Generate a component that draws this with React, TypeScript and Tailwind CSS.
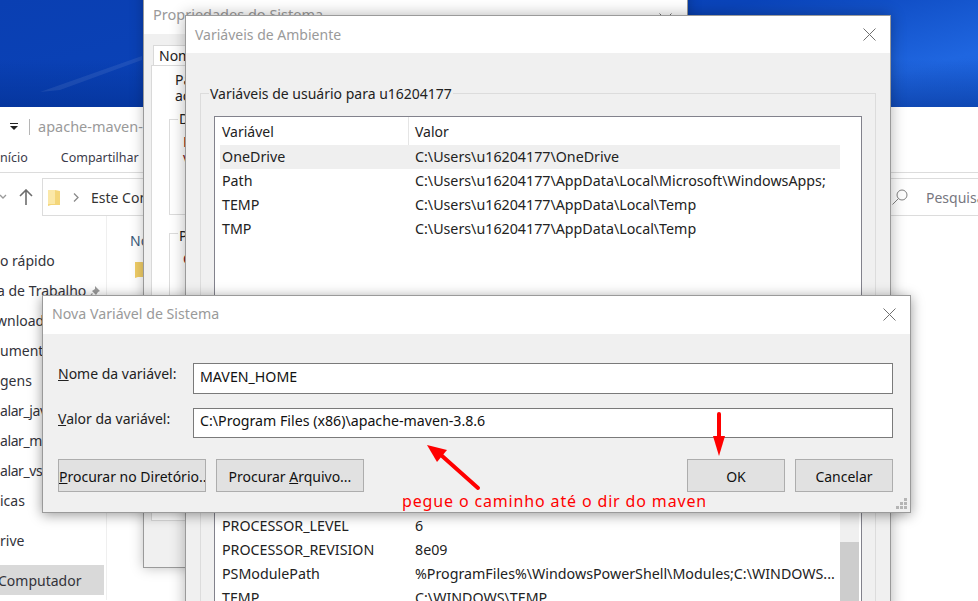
const font = "font-['Noto_Sans','Open_Sans',sans-serif]";

const sidebar = [
  { label: "o rápido", top: "mt-[34px]" },
  { label: "a de Trabalho", top: "mt-[6px] -ml-[3px]" },
  { label: "wnload", top: "mt-[6px] -ml-[4px]" },
  { label: "ument", top: "mt-[6px]" },
  { label: "gens", top: "mt-[6px]" },
  { label: "alar_java", top: "mt-[6px] tracking-[-0.4px]" },
  { label: "alar_maven", top: "mt-[6px] tracking-[-0.4px]" },
  { label: "alar_vscode", top: "mt-[6px] tracking-[-0.4px]" },
  { label: "icas", top: "mt-[6px]" },
  { label: "rive", top: "mt-[16px]" },
];

const userVars = [
  ["OneDrive", "C:\\Users\\u16204177\\OneDrive"],
  ["Path", "C:\\Users\\u16204177\\AppData\\Local\\Microsoft\\WindowsApps;"],
  ["TEMP", "C:\\Users\\u16204177\\AppData\\Local\\Temp"],
  ["TMP", "C:\\Users\\u16204177\\AppData\\Local\\Temp"],
];

const systemVars = [
  ["PROCESSOR_LEVEL", "6"],
  ["PROCESSOR_REVISION", "8e09"],
  ["PSModulePath", "%ProgramFiles%\\WindowsPowerShell\\Modules;C:\\WINDOWS..."],
  ["TEMP", "C:\\WINDOWS\\TEMP"],
];

function CloseIcon() {
  return (
    <svg width="13" height="13" viewBox="0 0 13 13" fill="none" stroke="#6f6f6f" strokeWidth="1">
      <path d="M0.5 0.5 12.5 12.5M12.5 0.5 0.5 12.5" />
    </svg>
  );
}

function VarRow({ name, value, selected }: { name: string; value: string; selected?: boolean }) {
  return (
    <div className={`flex h-[24px] shrink-0 items-center pl-[2px] whitespace-nowrap text-[14.25px] text-[#222] ${selected ? "bg-[#efefef]" : ""}`}>
      <div className="w-[193px] shrink-0">{name}</div>
      <div>{value}</div>
    </div>
  );
}

function DialogButton({ children, className }: { children: React.ReactNode; className: string }) {
  return (
    <button className={`h-[33px] border border-[#adadad] bg-[#e1e1e1] pt-[2px] text-[14px] text-[#111] whitespace-nowrap overflow-hidden ${className}`}>
      {children}
    </button>
  );
}

export default function App() {
  return (
    <div className={`relative h-[601px] w-[978px] overflow-hidden bg-white text-[14px] text-[#1a1a1a] ${font}`}>
      {/* Wallpaper */}
      <div className="h-[107px] bg-[linear-gradient(180deg,transparent_55%,rgba(0,40,130,0.45)_100%),linear-gradient(165deg,#0a3fb2_0%,#0a44ba_55%,#1f66e0_85%,#1c62dc_100%)]">
        <svg width="150" height="107" viewBox="0 0 150 107">
          <path d="M40 92 142 56 142 60 60 90z" fill="#ffffff" opacity="0.08" />
        </svg>
      </div>

      {/* Explorer behind everything */}
      <div className="flex h-[66px] flex-col border-b border-[#dcdcdc]">
        <div className="flex h-[40px] items-center">
          <svg className="ml-[9px]" width="10" height="8" viewBox="0 0 10 8" fill="#222">
            <path d="M1 0h8v1H1zM1 3h8L5 7z" />
          </svg>
          <div className="ml-[10px] h-[16px] w-px bg-[#b5b5b5]" />
          <span className="ml-[8px] text-[14.5px] text-[#9a9a9a]">apache-maven-</span>
        </div>
        <div className="flex h-[25px] items-end pb-[4px] text-[12.5px] text-[#3b3b4a]">
          <span>nício</span>
          <span className="ml-[33px]">Compartilhar</span>
        </div>
      </div>
      <div className="mt-[5px] flex h-[38px] items-center">
        <svg className="shrink-0" width="8" height="8" viewBox="0 0 8 8" fill="none" stroke="#9a9a9a" strokeWidth="1.3">
          <path d="M0 2l3 3 3-3" />
        </svg>
        <svg className="ml-[11px] shrink-0" width="14" height="16" viewBox="0 0 14 16" fill="none" stroke="#6d6d6d" strokeWidth="1.6">
          <path d="M7 16V1M1 7l6-6 6 6" />
        </svg>
        <div className="ml-[9px] flex h-[38px] w-[847px] shrink-0 items-center border border-[#dcdcdc]">
          <svg className="ml-[5px]" width="13" height="17" viewBox="0 0 13 17">
            <path d="M0 1h7l5 1v14H3l-3 1z" fill="#f4d67a" />
            <path d="M0 1h7v14H0z" fill="#fbe8a8" />
          </svg>
          <svg className="ml-[12px]" width="6" height="9" viewBox="0 0 6 9" fill="none" stroke="#8a8a8a" strokeWidth="1.3">
            <path d="M1 0.5l4 4-4 4" />
          </svg>
          <span className="ml-[12px] text-[#333]">Este Computador</span>
        </div>
        <div className="flex h-[38px] flex-1 items-center border-y border-[#dcdcdc] pl-[3px] text-[#77777f]">
          <svg width="16" height="16" viewBox="0 0 16 16" fill="none" stroke="#808080" strokeWidth="1">
            <circle cx="10" cy="6" r="5" />
            <path d="M6.5 9.5 0.5 15.5" />
          </svg>
          <span className="ml-[18px] whitespace-nowrap">Pesquisa</span>
        </div>
      </div>
      <div className="flex h-[384px]">
        <div className="w-[107px] border-r border-[#efefef] overflow-hidden whitespace-nowrap text-[#33333a]">
          {sidebar.map((item) => (
            <div key={item.label} className={`relative h-[24px] ${item.top}`}>
              {item.label}
              {item.label === "a de Trabalho" && (
                <svg className="absolute left-[90px] top-[5px]" width="14" height="14" viewBox="0 0 14 14" fill="#9a9a9a">
                  <path d="M8 1l5 5-2 1-2 3-4-4 3-2zM5 8l-4 5 5-4z" />
                </svg>
              )}
            </div>
          ))}
          <div className="mt-[11px] flex h-[30px] w-[104px] items-center bg-[#d9d9d9]">
            <span className="ml-[-2px]">Computador</span>
          </div>
        </div>
        <div className="pl-[23px] pt-[14px] text-[#3a5a7a]">
          Nome
          <svg className="mt-[10px] ml-[5px]" width="13" height="17" viewBox="0 0 13 17">
            <path d="M0 1h7l5 1v14H3l-3 1z" fill="#f0cd66" />
          </svg>
        </div>
      </div>

      {/* Propriedades do Sistema */}
      <div className="absolute left-[143px] top-[-18px] flex h-[586px] w-[545px] flex-col border border-[#9a9a9a] bg-[#f0f0f0] shadow-[0_0_12px_rgba(0,0,0,0.25)]">
        <div className="flex h-[51px] shrink-0 items-end justify-between bg-white pb-[8px] pl-[9px] pr-[15px] text-[14.5px] text-[#9a9a9a]">
          <span>Propriedades do Sistema</span>
          <CloseIcon />
        </div>
        <div className="pl-[7px] pt-[11px]">
          <div className="ml-[2px] flex h-[20px] w-[40px] items-center border border-b-0 border-[#d9d9d9] bg-white pl-[5px] text-[#222]">Nome</div>
          <div className="h-[456px] w-[530px] border border-[#d9d9d9] bg-white pl-[23px] pt-[6px] text-[#222]">
            <div className="leading-[16px]">Pa<br />ac</div>
            <div className="relative -ml-[6px] mt-[15px] h-[96px] border border-[#dcdcdc] pl-[13px] pt-[14px] leading-[16px] text-[#7a1020]">
              <span className="absolute left-[8px] top-[-9px] bg-white px-[1px] text-[#222]">D</span>
              E<br />v
            </div>
            <div className="relative -ml-[6px] mt-[18px] h-[120px] border border-[#dcdcdc] pl-[13px] pt-[14px] text-[#7a1020]">
              <span className="absolute left-[8px] top-[-9px] bg-white px-[1px] text-[#222]">P</span>
              C
            </div>
          </div>
        </div>
      </div>

      {/* Variáveis de Ambiente */}
      <div className="absolute left-[185px] top-[15px] flex h-[600px] w-[706px] flex-col border border-[#9a9a9a] bg-[#f0f0f0] shadow-[0_0_14px_rgba(0,0,0,0.3)]">
        <div className="flex h-[37px] shrink-0 items-center justify-between bg-white pl-[9px] pr-[14px] text-[#9a9a9a]">
          <span>Variáveis de Ambiente</span>
          <CloseIcon />
        </div>
        <div className="px-[14px] pt-[40px]">
          <div className="relative h-[520px] border border-[#dcdcdc] pl-[13px] pr-[13px] pt-[22px]">
            <span className="absolute left-[8px] top-[-11px] bg-[#f0f0f0] px-[1px] text-[#222]">Variáveis de usuário para u16204177</span>
            <div className="flex h-[500px] w-[648px] border border-[#82828c] bg-white">
              <div className="flex min-w-0 flex-1 flex-col pl-[5px]">
                <div className="flex h-[28px] shrink-0 items-center text-[#222]">
                  <div className="flex h-[28px] w-[189px] shrink-0 items-center border-r border-[#e5e5e5] pl-[2px]">Variável</div>
                  <div className="pl-[6px]">Valor</div>
                </div>
                {userVars.map(([name, value], i) => (
                  <VarRow key={name} name={name} value={value} selected={i === 0} />
                ))}
                <div className="h-[273px] shrink-0" />
                {systemVars.map(([name, value]) => (
                  <VarRow key={name} name={name} value={value} />
                ))}
              </div>
              <div className="mr-[2px] flex w-[19px] shrink-0 flex-col">
                <div className="h-[395px] bg-white" />
                <div className="h-[30px] bg-[#f0f0f0]" />
                <div className="flex-1 bg-[#cdcdcd]" />
              </div>
            </div>
          </div>
        </div>
      </div>

      {/* Nova Variável de Sistema */}
      <div className="absolute left-[42px] top-[295px] flex h-[218px] w-[869px] flex-col border border-[#9a9a9a] bg-[#f0f0f0] shadow-[0_2px_12px_rgba(0,0,0,0.4)]">
        <div className="flex h-[38px] shrink-0 items-center justify-between bg-white pb-[2px] pl-[9px] pr-[14px] text-[14.2px] text-[#9a9a9a]">
          <span>Nova Variável de Sistema</span>
          <CloseIcon />
        </div>
        <div className="flex flex-col pl-[15px] pr-[17px] pt-[29px]">
          <div className="flex h-[31px] items-center justify-between">
            <label className="text-[#222] -translate-y-[5px]"><u>N</u>ome da variável:</label>
            <input readOnly value="MAVEN_HOME" className="h-[31px] w-[700px] border border-[#7a7a7a] bg-white px-[6px] pb-[4px] text-[14.2px] text-[#111] outline-none" />
          </div>
          <div className="mt-[14px] flex h-[30px] items-center justify-between">
            <label className="text-[#222] -translate-y-[5px]"><u>V</u>alor da variável:</label>
            <input readOnly value="C:\Program Files (x86)\apache-maven-3.8.6" className="h-[30px] w-[700px] border border-[#7a7a7a] bg-white px-[6px] pb-[6px] text-[14.2px] text-[#111] outline-none" />
          </div>
          <div className="mt-[21px] flex gap-[10px]">
            <DialogButton className="w-[148px]"><u>P</u>rocurar no Diretório...</DialogButton>
            <DialogButton className="w-[148px]">Procurar <u>A</u>rquivo...</DialogButton>
            <DialogButton className="ml-auto w-[98px]">OK</DialogButton>
            <DialogButton className="w-[98px]">Cancelar</DialogButton>
          </div>
        </div>
        <svg className="absolute bottom-[2px] right-[2px]" width="12" height="12" viewBox="0 0 12 12" fill="#b5b5b5">
          <path d="M8 0h3v3H8zM4 4h3v3H4zM8 4h3v3H8zM0 8h3v3H0zM4 8h3v3H4zM8 8h3v3H8z" />
        </svg>
        <div className="absolute left-[359px] top-[195px] w-[303px] overflow-hidden whitespace-nowrap text-[16px] leading-[20px] tracking-[0.85px] text-[#ff0000]">
          pegue o caminho até o dir do maven
        </div>
      </div>

      {/* Anotações */}
      <svg className="pointer-events-none absolute left-0 top-0" width="978" height="601" viewBox="0 0 978 601" fill="#ff0000" stroke="none">
        <path d="M478 488 441 455" stroke="#ff0000" strokeWidth="4" strokeLinecap="round" />
        <path d="M427 445 447 450 437 462z" />
        <path d="M719 414V438" stroke="#ff0000" strokeWidth="4" strokeLinecap="round" />
        <path d="M713 436H725L719 456z" />
      </svg>
    </div>
  );
}
